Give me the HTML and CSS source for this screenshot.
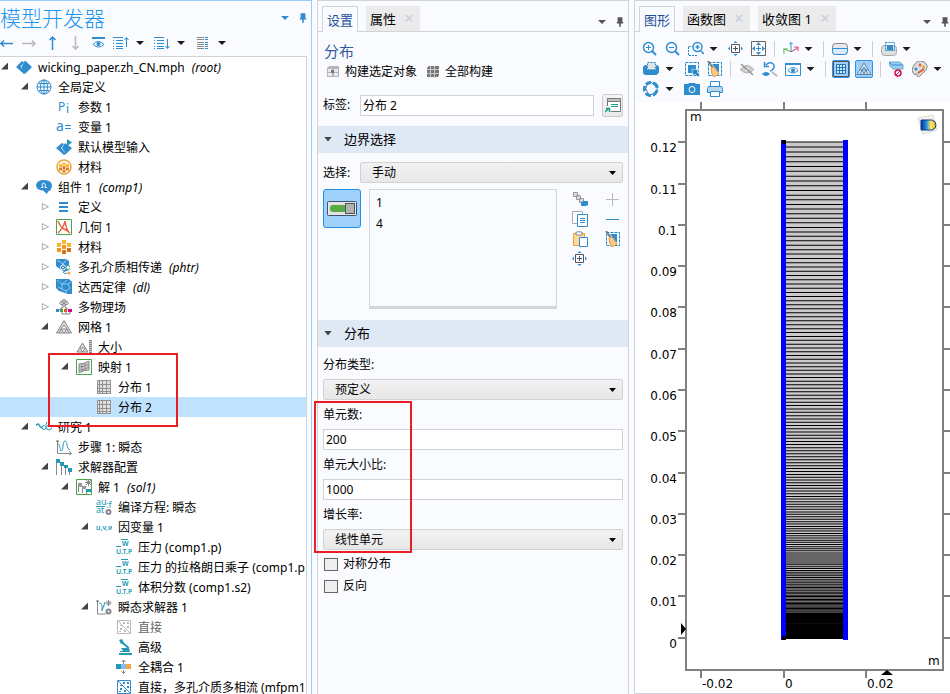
FILE: index.html
```html
<!DOCTYPE html>
<html lang="zh-CN">
<head>
<meta charset="utf-8">
<title>wicking_paper.zh_CN.mph</title>
<link rel="stylesheet" href="styles.css">
</head>
<body>
<svg class="defs" aria-hidden="true">
  <defs>
    <linearGradient id="jet" x1="0" x2="1"><stop offset="0" stop-color="#0a2a9c"/><stop offset=".35" stop-color="#1b8fe0"/><stop offset=".65" stop-color="#f5e96a"/><stop offset="1" stop-color="#f0b000"/></linearGradient>
    <symbol id="left" viewBox="0 0 16 16"><path d="M0 8.500h13M4 5.500 1 8.500l3 3" class="sb w15"/></symbol>
    <symbol id="right" viewBox="0 0 16 16"><path d="M1 8.500h13M11 5.500l3 3-3 3" class="sl w15"/></symbol>
    <symbol id="up" viewBox="0 0 16 16"><path d="M8.500 15V2M5.500 5l3-3 3 3" class="sb w15"/></symbol>
    <symbol id="down" viewBox="0 0 16 16"><path d="M8.500 1v13M5.500 11l3 3 3-3" class="sl w15"/></symbol>
    <symbol id="eyebar" viewBox="0 0 16 16"><path d="M2 3h13" class="sb w2"/><path d="M3 9.500q5-6 11 0q-5 5-11 0z" class="sb"/><circle cx="8.500" cy="9" r="2" class="fb"/></symbol>
    <symbol id="listup" viewBox="0 0 16 16"><path d="M0 2.500h10M3 5.500h7M3 8.500h7M3 11.500h7M3 13.500h7M0 5.500h1M0 8.500h1M0 11.500h1M0 13.500h1M13.500 12V3M11.500 5l2-2.500 2 2.500" class="sb"/></symbol>
    <symbol id="listdown" viewBox="0 0 16 16"><path d="M0 2.500h10M3 5.500h7M3 8.500h7M3 11.500h7M3 13.500h7M0 5.500h1M0 8.500h1M0 11.500h1M0 13.500h1M13.500 4v9M11.500 11l2 2.500 2-2.500" class="sb"/></symbol>
    <symbol id="columns" viewBox="0 0 16 16"><path d="M2 2.500h7M2 4.500h7M2 7.500h7M2 9.500h7M2 11.500h7M2 13.500h7" class="sg"/><path d="M10 2.500h3M10 4.500h3M10 7.500h3M10 9.500h3M10 11.500h3M10 13.500h3" class="sb"/></symbol>
    <symbol id="pin" viewBox="0 0 10 12"><path d="M2 0h6v6h1v2H1V6h1zM4 8h2v4H4z" fill="currentColor"/></symbol>
    <symbol id="root" viewBox="0 0 16 16"><path d="M0 8 6 2l2 1.500L4.500 7.500l4.500 6L8 15zM9 1.500l7 6.500-7 7L5.500 8z" class="fb"/></symbol>
    <symbol id="globe" viewBox="0 0 16 16"><circle cx="8" cy="8" r="7" class="sb"/><path d="M1 8h14M8 1v14M2.500 4.500h11M2.500 11.500h11" class="sb"/><ellipse cx="8" cy="8" rx="3.500" ry="7" class="sb"/></symbol>
    <symbol id="pi" viewBox="0 0 16 16"><text x="2" y="12" class="tb">P</text><text x="10" y="14" class="tb">i</text></symbol>
    <symbol id="aeq" viewBox="0 0 16 16"><text x="0" y="12" class="tb t14">a</text><path d="M9 6.500h6M9 9.500h6" class="sb"/></symbol>
    <symbol id="input" viewBox="0 0 16 16"><path d="M0 9 6 4l2 1-3 4 5 6L8 16zM9 4l7 5-6 6L6 9z" class="fb"/><path d="M11 0v7l5-3.500z" class="ft"/></symbol>
    <symbol id="matglobal" viewBox="0 0 16 16"><circle cx="8" cy="8" r="7" class="so w15"/><path d="M3 5h3v3H3zM6.500 3.500h3v3h-3zM10 5h3v3h-3z" fill="#ffb62c"/><path d="M3 8.500h3v3H3zM6.500 7h3v3h-3zM10 8.500h3v3h-3zM6.500 10.500h3v3h-3z" fill="#d98420"/></symbol>
    <symbol id="component" viewBox="0 0 16 16"><path d="M0 6Q1 1 8 1q8 0 8 6-1 5-4 5.500L11 15l-4-3.500Q0 11 0 6z" class="fb"/><path d="M5 8.500h2c-3-6 4-6 2 0h2" fill="none" stroke="#fff"/></symbol>
    <symbol id="lines" viewBox="0 0 16 16"><path d="M3 4h9M3 8h9M3 12h9" class="sb w2"/></symbol>
    <symbol id="geom" viewBox="0 0 16 16"><path d="M.5.500h15v15H.5z" fill="#fff" class="sgr"/><path d="M2 2q3 7 6 8T14 14M2 14Q8 8 9 2q1 9 5 12" fill="none" stroke="#e8633c" stroke-width="1.500"/></symbol>
    <symbol id="mat" viewBox="0 0 16 16"><path d="M1 4h4v4H1zM6 1h4v4H6zM11 4h4v4h-4z" fill="#ffb429"/><path d="M1 9h4v4H1zM6 6h4v4H6z" fill="#f79420"/><path d="M6 11h4v4H6zM11 9h4v4h-4z" fill="#d2761b"/></symbol>
    <symbol id="phtr" viewBox="0 0 16 16"><path d="M0 0h10l3 2v9l-5 2-8-6z" class="fb"/><path d="m1 1 6 4 3-4M7 5l1 4" stroke="#9ccff0" fill="none"/><circle cx="7" cy="8.500" r="2.500" fill="#2577b9" stroke="#fff"/><circle cx="12" cy="8.500" r="2" fill="#fff" stroke="#3aa77c"/><path d="M7 13q2 3 4 1" class="sb"/><path d="M6 8.500h2M13 8.500h3" stroke="#fff"/><circle cx="13" cy="14" r="1.500" fill="#f0a040"/></symbol>
    <symbol id="darcy" viewBox="0 0 16 16"><path d="M0 0h13l3 3v12l-4 0-9-3-3-3z" class="fb"/><path d="m1 1 5 4 5-4M6 5v5l4 2 4-3-2-4-6 0M10 12v3M12 5l3-2M6 10l-4-2" stroke="#8ec8f0" fill="none"/></symbol>
    <symbol id="multi" viewBox="0 0 16 16"><ellipse cx="8" cy="4" rx="4.500" ry="2" class="sg"/><ellipse cx="8" cy="4" rx="2" ry="4" class="sg"/><circle cx="8" cy="4" r="1" fill="#3aa050"/><path d="m3 11 4-3M6 10V8M10 10V8M13 11 9 8M6 12v3h8v-3M10 12v3" class="sg"/><path d="M0 10h3v3H0z" class="fb"/><path d="M4 10h3v3H4z" fill="#48a63c"/><path d="M8 10h3v3H8z" fill="#e3572c"/><path d="M12 10h4v3h-4z" fill="#d8008a"/></symbol>
    <symbol id="mesh" viewBox="0 0 16 16"><path d="M8 1.500 15.500 14H.5zM8 6l-3 4h6zM5 10l-2 4M5 10l3 4 3-4 2 4" fill="#dadada" class="sg"/></symbol>
    <symbol id="size" viewBox="0 0 16 16"><path d="M6.500 4 12 13H1zM4 9l2.500 4L9 9zM0 14.500h16" fill="#dadada" class="sg"/><path d="M14.500 1v13" stroke="#888" stroke-width="3" stroke-dasharray="1.500 .5"/></symbol>
    <symbol id="mapped" viewBox="0 0 16 16"><path d="M.5.500h15v15H.5z" fill="#fff" class="sgr"/><path d="M3 5q5 0 10-3v9q-5 0-10 3zM3 8q5 0 10-3M3 11q5 0 10-3M6 5v8M9 4v8" fill="#ccc" class="sg"/></symbol>
    <symbol id="dist" viewBox="0 0 16 16"><path d="M1.500 1.500h13v13h-13zM3.500 1v13M6.500 1v13M10.500 1v13M1 5.500h13M1 9.500h13M1 12.500h13" fill="#e1e1e1" stroke="#909090"/></symbol>
    <symbol id="study" viewBox="0 0 16 16"><path d="M0 6.500q2-3 3.500 0t3 2" class="st w15"/><circle cx="8" cy="8.500" r="2" class="st"/><circle cx="13" cy="8.500" r="2.500" class="st"/><path d="m10 6 1-3" class="st"/></symbol>
    <symbol id="step" viewBox="0 0 16 16"><path d="M1.500 1v13.500H15M0 3l1.500-2L3 3M13 12l2.500 2.500L13 16" class="sg"/><path d="M2 5c2 0 2 7 3 7 3 0 1-10 4-10s1 8 5 9" class="st"/></symbol>
    <symbol id="solvers" viewBox="0 0 16 16"><path d="M.5 2v14M5.500 5v11M9.500 8v8M13.500 12v4" class="sg"/><path d="M0 0h4v4H0zM4 3h4v4H4zM8 6h4v3H8zM12 9h4v4h-4z" class="ft"/></symbol>
    <symbol id="sol" viewBox="0 0 16 16"><path d="M.5.500h15v15H.5z" fill="#fff" class="sgr"/><path d="M2 4h4v4H2zM6 7h4v3H6z" fill="#999"/><path d="M2.500 8v5M6.500 10v4M10.500 11v4" class="sg"/><path d="M10 10h5v3h-5z" class="ft"/><path d="M12.500 0v7M9 3.500h7M10 1l5 5M15 1l-5 5" class="sg"/></symbol>
    <symbol id="compile" viewBox="0 0 16 16"><text x="0" y="6" class="tt t9">au</text><text x="0" y="14" class="tt t9">at</text><text x="10" y="9" class="tt t9">:f</text><path d="M0 7.500h9" class="st"/><circle cx="12.500" cy="13" r="2" class="sg w2"/></symbol>
    <symbol id="uvw" viewBox="0 0 18 16"><text x="0" y="11" class="tt t8">u,v,w</text></symbol>
    <symbol id="field" viewBox="0 0 16 16"><path d="M5 .5h7M0 7.500h5" class="st"/><text x="6" y="7" class="tt t8">w</text><text x="0" y="15" class="tt">U.T.P</text></symbol>
    <symbol id="transient" viewBox="0 0 16 16"><path d="M1.500 1v14H10M0 3l1.500-2L3 3M12.500 1v6M9.500 4h6M10.500 2l4 4M14.500 2l-4 4" class="sg"/><path d="M3 4q4 0 3 6t3-7" class="st"/><circle cx="12.500" cy="12.500" r="2" class="sg w2"/></symbol>
    <symbol id="direct" viewBox="0 0 16 16"><path d="M1.500 1.500h13v13h-13zM2 2l12 12" fill="#fff" stroke="currentColor"/><path d="M4 6h2v1H4zM4 9h2v2H4zM7 3h2v2H7zM11 3h2v2h-2zM11 7h2v2h-2zM3 12h2v1H3zM8 11h2v2H8z" fill="currentColor"/></symbol>
    <symbol id="advanced" viewBox="0 0 16 16"><path d="M5 2.500l7 6V11" class="st w2"/><path d="M3 1 6 0l2 4-3 1zM5 9h8l1 4H4v-1h3zM3 14h13v2H3z" class="ft"/></symbol>
    <symbol id="coupled" viewBox="0 0 16 16"><path d="M0 5h5v5H0z" class="ft"/><path d="M5 5h5v5H5z" fill="#84bfee"/><path d="M10 5h5v5h-5z" fill="#f4a443"/><path d="M7.500 5V1M5.500 3l2-2 2 2M7.500 11v4M5.500 12.500l2 2 2-2" class="sg"/></symbol>
    <symbol id="buildsel" viewBox="0 0 14 14"><path d="M1 3l2-2h10v11H1z" fill="#b5b5b5"/><path d="M2 4h4v3H2zM8 4h4v3H8zM2 8h4v3H2zM8 8h4v3H8z" fill="#e9e9e9"/><path d="M5 5h3v3H5z" fill="#777"/></symbol>
    <symbol id="buildall" viewBox="0 0 14 14"><path d="M1 3l2-2h10v9l-1 2H1z" fill="#777"/><path d="M1 4.500h12M1 8.500h12M4.500 1v12M8.500 1v12" stroke="#c8c8c8"/></symbol>
    <symbol id="card" viewBox="0 0 16 16"><path d="M2.500 1.500h13v13H6M2.500 1v8" fill="none" stroke="#777"/><path d="M3 5h12v9H6L3 9z" fill="#fff"/><path d="M2.500 1.500h13v3h-13z" fill="#c4c4c4" stroke="#777"/><path d="M6 7.500h7M6 9.500h7" stroke="#15a085"/><path d="m0 15 4-4M1 11.500h3.500V15" stroke="#15a085" stroke-width="1.500" fill="none"/></symbol>
    <symbol id="toggle" viewBox="0 0 30 15"><rect x=".5" y=".5" width="29" height="14" rx="1" fill="#e4e4e4" stroke="#3d5573"/><rect x="3" y="4" width="17" height="7" rx="3" fill="#58aa43"/><rect x="18.500" y="2.500" width="9" height="10" fill="#b2b2b2" stroke="#4a5668"/></symbol>
    <symbol id="chain" viewBox="0 0 16 16"><path d="M1.500 1.500h4v4h-4zM4.500 4.500h4v4h-4zM7.500 7.500h4v4h-4z" fill="#ddd" stroke="#999"/><path d="m9 11 2-1h5v4l-2 1H9z" class="fb"/></symbol>
    <symbol id="plus" viewBox="0 0 16 16"><path d="M1 8.500h13M7.500 2v13" class="sl"/></symbol>
    <symbol id="minus" viewBox="0 0 16 16"><path d="M1 8.500h13" class="sb"/></symbol>
    <symbol id="copy" viewBox="0 0 16 16"><path d="M.5.500h10v12H.5z" fill="#fff" stroke="#aaa"/><path d="M5.500 3.500h10v12h-10z" fill="#fff" class="sb"/><path d="M8 7.500h5M8 9.500h5M8 11.500h5" class="sb"/></symbol>
    <symbol id="paste" viewBox="0 0 16 16"><path d="M1.500 2.500h11v12h-11z" fill="#ffda97" stroke="#eaa03d"/><path d="M4 3V1h2q1-1 2 0h2v3H4z" fill="#fff" class="sg"/><path d="M7.500 6.500h8v9h-8z" fill="#fff" class="sb"/></symbol>
    <symbol id="center" viewBox="0 0 16 16"><path d="M3.500 3.500h8v8h-8zM5 7.500h5M7.500 5v5" fill="none" stroke="#555"/><path d="m5.500 2 2-2 2 2zM5.500 13l2 2 2-2zM2 5.500l-2 2 2 2zM13 5.500l2 2-2 2z" class="fb"/></symbol>
    <symbol id="fit" viewBox="0 0 16 16"><path d="M.5.500h14v14H.5z" fill="none" stroke="#666"/><path d="M5 7.500h5M7.500 5v5" stroke="#2e8ccf"/><path d="m5 4 2.500-3 2.500 3zM5 11l2.500 3 2.500-3zM4 5 1 7.500 4 10zM11 5l3 2.500-3 2.500z" class="fb"/></symbol>
    <symbol id="broom" viewBox="0 0 16 16"><path d="M1.500 1.500h13v13h-13z" fill="none" stroke="#2587ca" stroke-dasharray="3 1"/><path d="M5 3h7v9z" class="fb"/><path d="M1 0l5 7" stroke="#777" stroke-width="2"/><path d="m4 7 3-1 5 7-5 3q-3-3-3-9z" fill="#ffc987" stroke="#e39a48"/></symbol>
    <symbol id="zin" viewBox="0 0 16 16"><circle cx="6.500" cy="6.500" r="5" class="sb w15"/><path d="M4 6.500h5M6.500 4v5" class="sb"/><path d="m10 10 4 4" class="sb w2"/></symbol>
    <symbol id="zout" viewBox="0 0 16 16"><circle cx="6.500" cy="6.500" r="5" class="sb w15"/><path d="M4 6.500h5" class="sb"/><path d="m10 10 4 4" class="sb w2"/></symbol>
    <symbol id="zbox" viewBox="0 0 16 16"><path d="M.5 6v8.500H9M.5 5.500H4" fill="none" stroke="#2587ca" stroke-dasharray="2 1"/><circle cx="9.500" cy="6" r="4.500" class="sb w15"/><path d="M7.500 6h4M9.500 4v4M13 10l3 3" class="sb w15"/></symbol>
    <symbol id="axes" viewBox="0 0 17 16"><path d="M8.500 11V1M6.500 3l2-2 2 2" class="sb"/><path d="m8.500 11-7-3M1 13V9M0 8h5" fill="none" stroke="#45a83b"/><path d="m8.500 11 7-4M12 6h4v4" fill="none" stroke="#ce2b69"/></symbol>
    <symbol id="clip" viewBox="0 0 16 16"><rect x=".5" y="2.500" width="15" height="11" rx="3" fill="#e4e6e8" stroke="#888"/><path d="M.5 7.500h15v3q-1 3-3 3h-9q-3 0-3-3z" fill="#d9eafa" class="sb"/></symbol>
    <symbol id="selbox" viewBox="0 0 16 16"><rect x=".5" y="4.500" width="15" height="10" rx="3" fill="#ddd" stroke="#aaa"/><path d="M6 4h6v5H6z" class="fb"/><path d="M4.500 1.500h9v8h-9z" fill="none" stroke="#2587ca" stroke-dasharray="2 1"/></symbol>
    <symbol id="box" viewBox="0 0 16 16"><path d="M0 7q0-3 3-3h10q3 0 3 3v4q-1 3-3 3H3q-3 0-3-3z" class="fb"/><path d="M4.500 1.500h8v7h-8z" fill="#e2e2e2" stroke="#fff"/><path d="M4.500 1.500h8v7h-8z" fill="none" stroke="#2587ca" stroke-dasharray="2 1"/></symbol>
    <symbol id="pick" viewBox="0 0 16 16"><path d="M1.500 1.500h13v13h-13z" fill="none" stroke="#2587ca" stroke-dasharray="3 1"/><path d="M4 4h8v8H4z" class="fb"/><path d="M8 8l7 1-2 2 3 3-2 2-3-3-2 2z" fill="#2587ca" stroke="#fff" stroke-width=".5"/></symbol>
    <symbol id="hide" viewBox="0 0 16 16"><path d="M1 8.500q7-8 14 0-7 7-14 0z" fill="#ccc" stroke="#b5b5b5"/><circle cx="8" cy="8.500" r="2" fill="#eee"/><path d="m2 3 12 11" stroke="#909090" stroke-width="1.500"/></symbol>
    <symbol id="reset" viewBox="0 0 16 16"><path d="M4 4q2-3 6-2 4 3 1 6-1 2-3 2M2.500 1v4.500H7" class="sb w15"/><path d="M0 13q4-4 8 0-4 4-8 0z" class="fb"/><path d="m10 11 5 4" class="sl w2"/></symbol>
    <symbol id="view" viewBox="0 0 16 16"><path d="M.5 2.500h15v12H.5z" fill="#fff" class="sb"/><path d="M0 2h16v2H0z" class="fb"/><path d="M3 9.500q5-6 10 0-5 5-10 0z" class="sb"/><circle cx="8" cy="9.500" r="2" class="fb"/></symbol>
    <symbol id="grid" viewBox="0 0 16 16"><path d="M.5.500h15v15H.5z" fill="#9dcffa" stroke="#555"/><path d="M3.500 3.500h9v9h-9zM6.500 3v10M9.500 3v10M3 6.500h10M3 9.500h10" fill="#d3eafe" stroke="#1e75b8"/></symbol>
    <symbol id="tri" viewBox="0 0 16 16"><path d="M8 2 15 13.500H1zM8 6l4 7.500M8 6l-4 7.500M5 8l4 5.500M11 8l-4 5.500M4.500 9h7" fill="#d5e9fc" stroke="#5f84a6"/></symbol>
    <symbol id="nosec" viewBox="0 0 16 16"><path d="m0 1h11l3 3v4H4L0 4z" fill="#9ccdf2" stroke="#74a6ca"/><path d="M0 1.500 3.500 4H14" class="sb"/><circle cx="9" cy="12" r="3" fill="#fff" stroke="#d4144e" stroke-width="1.500"/><path d="m7 14 4-4" stroke="#d4144e"/></symbol>
    <symbol id="palette" viewBox="0 0 16 16"><path d="M3 14q-5-4-1-10t10-3q5 3 2 8l-6 6q-3 2-3-1t-2 0z" fill="#ddd" stroke="#888"/><circle cx="8" cy="4" r="1.500" fill="#e8633c"/><circle cx="4" cy="8" r="1.500" class="fb"/><circle cx="11.500" cy="6" r="1.500" fill="#e8a13c"/><path d="M6 12 12 8" stroke="#e3572c" stroke-width="2"/></symbol>
    <symbol id="shutter" viewBox="0 0 16 16"><g fill="none" stroke="#2e8ccf" stroke-width="3"><path d="M3 3.500Q5 1.500 8 1.500"/><path d="M10 2q4 1 4 5"/><path d="M14 9q-1 4-4 5"/><path d="M8 14.500Q4 14.500 3 12"/><path d="M2 10Q1 8 2 5"/></g><path d="m7 0 5 5M15 5l-2 6M13 12l-6 2M6 14 3 8M2 9l3-7" stroke="#2e8ccf" fill="none"/></symbol>
    <symbol id="camera" viewBox="0 0 16 16"><path d="M0 3h4l1-1h6l1 1h4v11H0z" class="fb"/><circle cx="8" cy="8.500" r="3" fill="#2e8ccf" stroke="#fff"/></symbol>
    <symbol id="printer" viewBox="0 0 16 16"><path d="M3.500.500h9v5h-9z" fill="#fff" class="sb"/><path d="M1.500 5.500h13q1 1 1 3v3H.5v-4z" fill="#b9d6ef" class="sb"/><path d="M3.500 10.500h9v5h-9z" fill="#fff" class="sb"/></symbol>
  </defs>
</svg>

<main class="app">
  <section class="panel builder">
    <header class="builder-head">
      <h1>模型开发器</h1>
      <div class="dock blue"><i class="caret"></i><svg class="pin"><use href="#pin"/></svg></div>
    </header>
    <div class="bar builder-bar">
      <button class="first" aria-label="后退"><svg><use href="#left"/></svg></button>
      <button aria-label="前进"><svg><use href="#right"/></svg></button>
      <button aria-label="上移"><svg><use href="#up"/></svg></button>
      <button aria-label="下移"><svg><use href="#down"/></svg></button>
      <button aria-label="显示"><svg><use href="#eyebar"/></svg></button>
      <button aria-label="折叠"><svg><use href="#listup"/></svg></button><button class="drop" aria-label="折叠选项"><i class="caret"></i></button>
      <button aria-label="展开"><svg><use href="#listdown"/></svg></button><button class="drop" aria-label="展开选项"><i class="caret"></i></button>
      <button aria-label="列"><svg><use href="#columns"/></svg></button><button class="drop" aria-label="列选项"><i class="caret"></i></button>
    </div>
    <div class="tree">
      <div class="row open"><svg><use href="#root"/></svg><span>wicking_paper.zh_CN.mph</span><em>(root)</em></div>
      <div class="row d1 open"><svg><use href="#globe"/></svg><span>全局定义</span></div>
      <div class="row d2"><svg><use href="#pi"/></svg><span>参数 1</span></div>
      <div class="row d2"><svg><use href="#aeq"/></svg><span>变量 1</span></div>
      <div class="row d2"><svg><use href="#input"/></svg><span>默认模型输入</span></div>
      <div class="row d2"><svg><use href="#matglobal"/></svg><span>材料</span></div>
      <div class="row d1 open"><svg><use href="#component"/></svg><span>组件 1</span><em>(comp1)</em></div>
      <div class="row d2 shut"><svg><use href="#lines"/></svg><span>定义</span></div>
      <div class="row d2 shut"><svg><use href="#geom"/></svg><span>几何 1</span></div>
      <div class="row d2 shut"><svg><use href="#mat"/></svg><span>材料</span></div>
      <div class="row d2 shut"><svg><use href="#phtr"/></svg><span>多孔介质相传递</span><em>(phtr)</em></div>
      <div class="row d2 shut"><svg><use href="#darcy"/></svg><span>达西定律</span><em>(dl)</em></div>
      <div class="row d2 shut"><svg><use href="#multi"/></svg><span>多物理场</span></div>
      <div class="row d2 open"><svg><use href="#mesh"/></svg><span>网格 1</span></div>
      <div class="row d3"><svg><use href="#size"/></svg><span>大小</span></div>
      <div class="marked tree-mark">
        <div class="row d3 open"><svg><use href="#mapped"/></svg><span>映射 1</span></div>
        <div class="row d4"><svg><use href="#dist"/></svg><span>分布 1</span></div>
        <div class="row d4 current"><svg><use href="#dist"/></svg><span>分布 2</span></div>
      </div>
      <div class="row d1 open"><svg><use href="#study"/></svg><span>研究 1</span></div>
      <div class="row d2"><svg><use href="#step"/></svg><span>步骤 1: 瞬态</span></div>
      <div class="row d2 open"><svg><use href="#solvers"/></svg><span>求解器配置</span></div>
      <div class="row d3 open"><svg><use href="#sol"/></svg><span>解 1</span><em>(sol1)</em></div>
      <div class="row d4"><svg><use href="#compile"/></svg><span>编译方程: 瞬态</span></div>
      <div class="row d4 open"><svg><use href="#uvw"/></svg><span>因变量 1</span></div>
      <div class="row d5"><svg><use href="#field"/></svg><span>压力 (comp1.p)</span></div>
      <div class="row d5"><svg><use href="#field"/></svg><span>压力 的拉格朗日乘子 (comp1.p</span></div>
      <div class="row d5"><svg><use href="#field"/></svg><span>体积分数 (comp1.s2)</span></div>
      <div class="row d4 open"><svg><use href="#transient"/></svg><span>瞬态求解器 1</span></div>
      <div class="row d5 off"><svg><use href="#direct"/></svg><span>直接</span></div>
      <div class="row d5"><svg><use href="#advanced"/></svg><span>高级</span></div>
      <div class="row d5"><svg><use href="#coupled"/></svg><span>全耦合 1</span></div>
      <div class="row d5"><svg class="blue"><use href="#direct"/></svg><span>直接，多孔介质多相流 (mfpm1</span></div>
    </div>
  </section>

  <section class="panel settings">
    <nav class="tabs">
      <button class="tab active">设置</button>
      <button class="tab">属性<i class="close">✕</i></button>
      <div class="dock"><i class="caret"></i><svg class="pin"><use href="#pin"/></svg></div>
    </nav>
    <h2>分布</h2>
    <div class="actions">
      <button><svg><use href="#buildsel"/></svg>构建选定对象</button>
      <button><svg><use href="#buildall"/></svg>全部构建</button>
    </div>
    <div class="line label-line">
      <label for="tag">标签:</label><input id="tag" type="text" value="分布 2">
      <button class="card" aria-label="重命名"><svg><use href="#card"/></svg></button>
    </div>
    <h3>边界选择</h3>
    <div class="line">
      <label for="sel">选择:</label><div class="select"><select id="sel"><option>手动</option></select></div>
    </div>
    <div class="selection">
      <button class="toggle" aria-label="激活选择"><svg><use href="#toggle"/></svg></button>
      <ul><li>1</li><li>4</li></ul>
      <div class="tools">
        <button aria-label="创建选择"><svg><use href="#chain"/></svg></button><button aria-label="添加"><svg><use href="#plus"/></svg></button>
        <button aria-label="复制"><svg><use href="#copy"/></svg></button><button aria-label="移除"><svg><use href="#minus"/></svg></button>
        <button aria-label="粘贴"><svg><use href="#paste"/></svg></button><button aria-label="清除"><svg><use href="#broom"/></svg></button>
        <button aria-label="缩放到选择"><svg><use href="#center"/></svg></button>
      </div>
    </div>
    <h3>分布</h3>
    <div class="form">
      <label for="type">分布类型:</label>
      <div class="select"><select id="type"><option>预定义</option></select></div>
      <div class="marked form-mark">
        <label for="count">单元数:</label>
        <input id="count" type="text" value="200">
        <label for="ratio">单元大小比:</label>
        <input id="ratio" type="text" value="1000">
        <label for="growth">增长率:</label>
        <div class="select"><select id="growth"><option>线性单元</option></select></div>
      </div>
      <label class="check"><input type="checkbox">对称分布</label>
      <label class="check"><input type="checkbox">反向</label>
    </div>
  </section>

  <section class="panel graphics">
    <nav class="tabs">
      <button class="tab active">图形</button>
      <button class="tab">函数图<i class="close">✕</i></button>
      <button class="tab">收敛图 1<i class="close">✕</i></button>
      <div class="dock"><i class="caret"></i><svg class="pin"><use href="#pin"/></svg></div>
    </nav>
    <div class="bars">
      <div class="bar">
        <button aria-label="放大"><svg><use href="#zin"/></svg></button>
        <button aria-label="缩小"><svg><use href="#zout"/></svg></button>
        <button aria-label="框选缩放"><svg><use href="#zbox"/></svg></button><button class="drop" aria-label="缩放选项"><i class="caret"></i></button>
        <button aria-label="缩放到选择"><svg><use href="#center"/></svg></button>
        <button aria-label="缩放到窗口大小"><svg><use href="#fit"/></svg></button><i class="sep"></i>
        <button aria-label="视图方向"><svg><use href="#axes"/></svg></button><button class="drop" aria-label="方向选项"><i class="caret"></i></button><i class="sep"></i>
        <button aria-label="裁剪"><svg><use href="#clip"/></svg></button><button class="drop" aria-label="裁剪选项"><i class="caret"></i></button><i class="sep"></i>
        <button aria-label="选择框"><svg><use href="#selbox"/></svg></button><button class="drop" aria-label="选择选项"><i class="caret"></i></button>
      </div>
      <div class="bar">
        <button class="wide" aria-label="选择对象"><svg><use href="#box"/></svg></button><button class="drop" aria-label="对象选项"><i class="caret"></i></button>
        <button aria-label="框选"><svg><use href="#pick"/></svg></button>
        <button aria-label="清除选择"><svg><use href="#broom"/></svg></button><i class="sep"></i>
        <button aria-label="隐藏"><svg><use href="#hide"/></svg></button>
        <button aria-label="重置隐藏"><svg><use href="#reset"/></svg></button>
        <button aria-label="视图"><svg><use href="#view"/></svg></button><button class="drop" aria-label="视图选项"><i class="caret"></i></button><i class="sep"></i>
        <button class="on" aria-label="显示栅格"><svg><use href="#grid"/></svg></button>
        <button class="on" aria-label="网格渲染"><svg><use href="#tri"/></svg></button><i class="sep"></i>
        <button aria-label="截面"><svg><use href="#nosec"/></svg></button>
        <button aria-label="颜色"><svg><use href="#palette"/></svg></button><button class="drop" aria-label="颜色选项"><i class="caret"></i></button>
      </div>
      <div class="bar">
        <button class="wide" aria-label="快照"><svg><use href="#shutter"/></svg></button><button class="drop" aria-label="快照选项"><i class="caret"></i></button>
        <button aria-label="图像"><svg><use href="#camera"/></svg></button>
        <button aria-label="打印"><svg><use href="#printer"/></svg></button>
      </div>
    </div>
    <div class="plot">
      <svg viewBox="635 102 315 591" preserveAspectRatio="xMinYMin meet" role="img" aria-label="网格图">
        <rect x="686" y="110" width="257" height="560" class="axis"/>
        <g id="ticks"></g>
        <rect x="786" y="142" width="57" height="496" fill="#cacaca"/>
        <g id="mesh-lines" stroke="#000"></g>
        <path d="M783.500 140v500M845.500 140v500" stroke="#00f" stroke-width="5"/>
        <path d="M782 140h4v4h-4zM782 636h4v4h-4zM681 623l5 6-5 6zM881 675l6-5 6 5z"/>
        <text x="690" y="121">m</text><text x="928" y="665">m</text>
        <path d="m918 118 15-3 4 15-14 4z" fill="#f2f3ee" stroke="#dadcd5"/>
        <path d="M921 120h11q4 1 4 5t-4 5h-11z" fill="url(#jet)" stroke="#173c91"/>
      </svg>
    </div>
  </section>
</main>
<script src="plot.js"></script>
</body>
</html>
```
FILE: plot.js
```js
// Axis ticks and labels
const bottom = 638;
const ys = { '0.12': 142, '0.11': 184, '0.1': 225, '0.09': 266, '0.08': 307, '0.07': 349, '0.06': 390, '0.05': 431, '0.04': 473, '0.03': 514, '0.02': 555, '0.01': 596, '0': 638 };
const xs = { '-0.02': 701, '0': 784, '0.02': 866 };
let marks = '';
for (const [t, y] of Object.entries(ys)) {
  marks += `<path class="axis" d="M678 ${y}h7M944 ${y}h6"/><text x="677" y="${y + 10}" text-anchor="end">${t}</text>`;
}
for (const [t, x] of Object.entries(xs)) {
  marks += `<path class="axis" d="M${x} 102v7M${x} 671v7"/><text x="${x + 1}" y="688">${t}</text>`;
}
document.getElementById('ticks').innerHTML = marks;

// 200 elements, linear growth, last/first size ratio 1000
const n = 200, ratio = 1000, height = 496;
const first = 2 * height / (n * (1 + ratio));
const step = first * (ratio - 1) / (n - 1);
let lines = '', y = bottom;
for (let k = 0; k <= n; k++) {
  // The densest rows merge, so their lines are drawn heavier
  const weight = Math.max(1, 1.7 - k * 0.01).toFixed(2);
  lines += `<path d="M786 ${(Math.round(y * 4) / 4).toFixed(2)}h57" stroke-width="${weight}"/>`;
  y -= first + step * k;
}
document.getElementById('mesh-lines').innerHTML = lines;
```
FILE: styles.css
```css
*, *::before, *::after { box-sizing: border-box; }
body {
  margin: 0;
  background: #fafbff;
  color: #000;
  font: 12px/20px "Noto Sans", "Noto Sans CJK SC", sans-serif;
}
h1, h2, h3, ul { margin: 0; padding: 0; font-weight: 400; list-style: none; }
button { border: 0; padding: 0; background: none; font: inherit; color: inherit; }
.defs { position: absolute; width: 0; height: 0; }

/* Icon strokes and fills */
.sb, .sg, .sl, .st, .so, .sgr { stroke-width: 1; }
.sb { stroke: #2e8ccf; }
.sg { stroke: #888; }
.sl { stroke: #b9b9bd; }
.st { stroke: #2499b5; }
.so { stroke: #efa33d; }
.sgr { stroke: #4ba548; }
.sb:not([fill]), .sg:not([fill]), .sl:not([fill]), .st:not([fill]), .so { fill: none; }
.w15 { stroke-width: 1.5; }
.w2 { stroke-width: 2; }
.fb { fill: #2e8ccf; }
.ft { fill: #2499b5; }
.tb { fill: #2e8ccf; font-size: 12px; }
.t14 { font-size: 14px; }
.tt { fill: #2499b5; font-size: 7px; font-weight: 600; }
.t8 { font-size: 8px; }
.t9 { font-size: 9px; font-weight: 400; }

.app {
  display: grid;
  grid-template-columns: 312fr 312fr 316fr;
  gap: 5px;
  height: 100vh;
  overflow: hidden;
}
.panel { min-width: 0; min-height: 0; border: 1px solid #d0d3da; border-bottom: 0; overflow: hidden; }
.caret { width: 8px; height: 4px; background: #1a1a1a; clip-path: polygon(0 0, 100% 0, 50% 100%); }
.dock { display: flex; align-items: center; gap: 10px; margin-left: auto; color: #555; }
.dock .caret { background: #555; }
.dock.blue { color: #2e8ccf; }
.dock.blue .caret { background: #2e8ccf; }
.pin { width: 8px; height: 10px; }

.bar { display: flex; align-items: center; height: 20px; }
.bar button { display: flex; justify-content: center; align-items: center; flex: none; width: 23px; height: 18px; }
.bar svg { width: 16px; height: 16px; }
.bar .drop { width: 17px; padding-right: 4px; }
.bar .wide { width: 25px; }
.bar .on { width: 18px; margin: 0 3px 0 2px; background: #9dcffa; border: 1px solid #2e93e4; border-radius: 2px; }
.sep { width: 1px; height: 16px; margin: 0 4px; background: #ccced4; flex: none; }

/* Model tree */
.builder { display: flex; flex-direction: column; border-color: #99ccfa; border-left: 0; }
.builder-head { display: flex; align-items: center; height: 32px; padding: 2px 4px 0 0; }
.builder-head h1 { font-size: 21px; line-height: 30px; font-weight: 300; color: #1d95ee; }
.builder-bar { height: 23px; padding-bottom: 3px; }
.builder-bar .first { width: 17px; justify-content: flex-start; }
.builder-bar .drop { width: 18px; padding-right: 2px; }
.tree { flex: 1; min-height: 0; margin-right: 4px; border: 1px solid #d0d3da; border-width: 1px 1px 0 0; background: #fff; overflow: hidden; }
.row { position: relative; display: flex; align-items: center; height: 20px; padding-left: 16px; white-space: nowrap; }
.row svg { flex: none; width: 16px; height: 16px; margin-right: 6px; }
.row span, .row em { padding-top: 1px; }
.row em { margin-left: 7px; }
.d1 { padding-left: 36px; }
.d2 { padding-left: 56px; }
.d3 { padding-left: 76px; }
.d4 { padding-left: 96px; }
.d5 { padding-left: 116px; }
.row.open::before { content: ""; width: 7px; height: 7px; margin: 0 8px 2px -15px; background: #444; clip-path: polygon(100% 0, 100% 100%, 0 100%); }
.row.shut::before { content: "▷"; width: 6px; margin: -2px 8px 0 -14px; font: 9px/10px "DejaVu Sans", sans-serif; color: #666; }
.row.current { background: #bfe2ff; }
.row.off { color: #666; }
.row.off svg { color: #bbb; }
svg.blue { color: #2e8ccf; }
.marked { position: relative; }
.marked::after { content: ""; position: absolute; border: 2px solid #ec1c24; pointer-events: none; z-index: 2; }
.tree-mark::after { left: 48px; width: 130px; top: -4px; bottom: -10px; }

/* Tabs */
.tabs { display: flex; align-items: flex-end; height: 31px; padding: 0 0 0 4px; border-bottom: 1px solid #d0d3da; }
.tab { display: flex; align-items: center; height: 25px; margin: 0 0 0 8px; padding: 0 4px; background: #ebebeb; font-size: 13px; white-space: nowrap; }
.tab.active { height: 26px; margin: 0 0 -1px; padding: 0 4px; border: 1px solid #d0d3da; border-bottom: 0; background: #fafbff; color: #24509a; }
.close { width: 20px; padding-left: 6px; font: 13px/20px "DejaVu Sans", sans-serif; color: #c5cfdd; }
.tabs .dock { height: 18px; padding-right: 4px; }

/* Settings */
.settings { overflow: visible; }
.settings h2 { padding: 9px 6px 0; font-size: 15px; line-height: 20px; color: #335a9c; }
.actions { display: flex; gap: 9px; height: 21px; padding: 0 8px; }
.actions button { display: flex; align-items: center; gap: 5px; }
.actions svg { width: 14px; height: 14px; }
.line { display: flex; align-items: center; padding: 0 5px; }
.line label { width: 37px; }
.label-line { height: 44px; padding-top: 2px; }
.line input, .line .select { flex: 1; min-width: 0; }
input[type=text] { width: 100%; height: 21px; padding: 0 2px; border: 1px solid #d0d3d6; border-radius: 0; background: #fff; font: inherit; }
.card { display: grid; place-items: center; width: 21px; height: 23px; margin-left: 8px; border: 1px solid #ccc; border-radius: 2px; background: linear-gradient(#f5f5f5, #e9e9e9); }
.card svg { width: 16px; height: 16px; }
h3 { display: flex; align-items: center; gap: 12px; height: 27px; padding: 0 0 1px 6px; background: #dfe8f5; font-size: 13px; }
h3::before { content: ""; width: 8px; height: 5px; background: #444; clip-path: polygon(0 0, 100% 0, 50% 100%); }
h3 + .line { padding-top: 9px; }
.select { position: relative; height: 21px; }
.select::after { content: ""; position: absolute; right: 7px; top: 9px; width: 7px; height: 4px; background: #000; clip-path: polygon(0 0, 100% 0, 50% 100%); pointer-events: none; }
select { display: block; width: 100%; height: 21px; padding: 0 11px; appearance: none; border: 1px solid #d0d3d6; border-radius: 2px; background: linear-gradient(#f2f2f2, #e7e7e7); font: inherit; color: #000; }
.selection { display: flex; padding: 6px 5px 0; height: 137px; align-items: flex-start; }
.toggle { display: grid; place-items: center; flex: none; width: 38px; height: 39px; border: 1px solid #1e8fec; border-radius: 3px; background: #9fd1fa; }
.toggle svg { width: 30px; height: 15px; }
.selection ul { flex: 1; height: 120px; margin-left: 8px; padding: 2px 6px; border: 1px solid #d3d5d8; border-bottom-width: 3px; line-height: 21px; }
.tools { display: grid; grid-template-columns: 33px 16px; grid-auto-rows: 20px; margin-left: 15px; width: 51px; }
.tools button { display: grid; align-items: center; width: 16px; }
.tools svg { width: 16px; height: 16px; }
.form { display: flex; flex-direction: column; padding: 3px 5px 0; }
.form label { display: block; height: 29px; line-height: 29px; }
.form .check { display: flex; align-items: center; gap: 5px; height: 22px; line-height: 22px; }
.form-mark + .check { margin-top: 3px; }
.check input { appearance: none; width: 14px; height: 13px; margin: 0 0 0 1px; border: 1px solid #666; background: #efefef; }
.form-mark::after { left: -9px; width: 98px; top: 1px; bottom: -3px; }

/* Graphics */
.graphics { display: flex; flex-direction: column; border-right: 0; border-bottom: 1px solid #d0d3da; }
.graphics .tabs { flex: none; }
.graphics .dock { padding-right: 1px; }
.bars { padding: 7px 0 3px 3px; }
.plot { flex: 1; min-height: 0; background: #fff; }
.plot svg { display: block; width: 100%; height: 100%; }
.plot text { font: 12px "DejaVu Sans", sans-serif; }
.axis { fill: none; stroke: #808080; stroke-width: 2; }
```
